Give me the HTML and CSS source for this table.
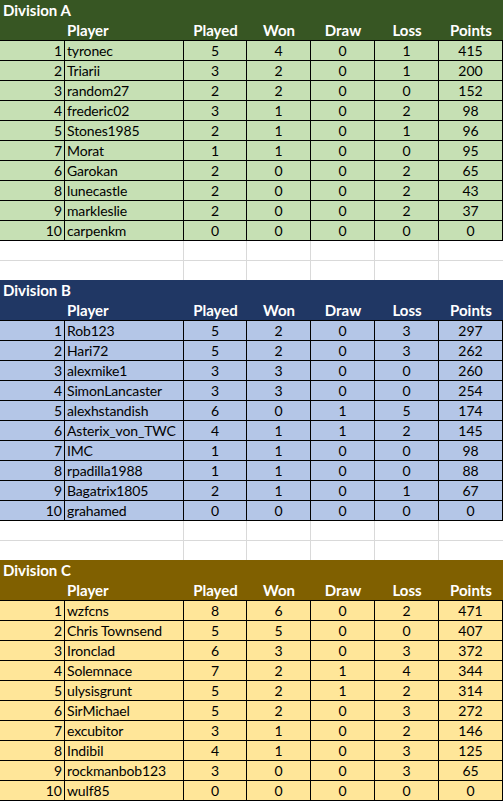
FILE: index.html
```html
<!DOCTYPE html>
<html>
<head>
<meta charset="utf-8">
<link rel="stylesheet" href="styles.css">
</head>
<body>
<div class="sheet">

<section class="division div-a">
  <div class="title">Division A</div>
  <div class="row head"><span></span><span class="name">Player</span><span>Played</span><span>Won</span><span>Draw</span><span>Loss</span><span>Points</span></div>
  <div class="row data"><span class="rank">1</span><span class="name">tyronec</span><span>5</span><span>4</span><span>0</span><span>1</span><span>415</span></div>
  <div class="row data"><span class="rank">2</span><span class="name">Triarii</span><span>3</span><span>2</span><span>0</span><span>1</span><span>200</span></div>
  <div class="row data"><span class="rank">3</span><span class="name">random27</span><span>2</span><span>2</span><span>0</span><span>0</span><span>152</span></div>
  <div class="row data"><span class="rank">4</span><span class="name">frederic02</span><span>3</span><span>1</span><span>0</span><span>2</span><span>98</span></div>
  <div class="row data"><span class="rank">5</span><span class="name">Stones1985</span><span>2</span><span>1</span><span>0</span><span>1</span><span>96</span></div>
  <div class="row data"><span class="rank">7</span><span class="name">Morat</span><span>1</span><span>1</span><span>0</span><span>0</span><span>95</span></div>
  <div class="row data"><span class="rank">6</span><span class="name">Garokan</span><span>2</span><span>0</span><span>0</span><span>2</span><span>65</span></div>
  <div class="row data"><span class="rank">8</span><span class="name">lunecastle</span><span>2</span><span>0</span><span>0</span><span>2</span><span>43</span></div>
  <div class="row data"><span class="rank">9</span><span class="name">markleslie</span><span>2</span><span>0</span><span>0</span><span>2</span><span>37</span></div>
  <div class="row data last"><span class="rank">10</span><span class="name">carpenkm</span><span>0</span><span>0</span><span>0</span><span>0</span><span>0</span></div>
</section>

<div class="spacer">
  <div class="row empty"><span></span><span></span><span></span><span></span><span></span><span></span><span></span></div>
  <div class="row empty short"><span></span><span></span><span></span><span></span><span></span><span></span><span></span></div>
</div>

<section class="division div-b">
  <div class="title">Division B</div>
  <div class="row head"><span></span><span class="name">Player</span><span>Played</span><span>Won</span><span>Draw</span><span>Loss</span><span>Points</span></div>
  <div class="row data"><span class="rank">1</span><span class="name">Rob123</span><span>5</span><span>2</span><span>0</span><span>3</span><span>297</span></div>
  <div class="row data"><span class="rank">2</span><span class="name">Hari72</span><span>5</span><span>2</span><span>0</span><span>3</span><span>262</span></div>
  <div class="row data"><span class="rank">3</span><span class="name">alexmike1</span><span>3</span><span>3</span><span>0</span><span>0</span><span>260</span></div>
  <div class="row data"><span class="rank">4</span><span class="name">SimonLancaster</span><span>3</span><span>3</span><span>0</span><span>0</span><span>254</span></div>
  <div class="row data"><span class="rank">5</span><span class="name">alexhstandish</span><span>6</span><span>0</span><span>1</span><span>5</span><span>174</span></div>
  <div class="row data"><span class="rank">6</span><span class="name">Asterix_von_TWC</span><span>4</span><span>1</span><span>1</span><span>2</span><span>145</span></div>
  <div class="row data"><span class="rank">7</span><span class="name">IMC</span><span>1</span><span>1</span><span>0</span><span>0</span><span>98</span></div>
  <div class="row data"><span class="rank">8</span><span class="name">rpadilla1988</span><span>1</span><span>1</span><span>0</span><span>0</span><span>88</span></div>
  <div class="row data"><span class="rank">9</span><span class="name">Bagatrix1805</span><span>2</span><span>1</span><span>0</span><span>1</span><span>67</span></div>
  <div class="row data last"><span class="rank">10</span><span class="name">grahamed</span><span>0</span><span>0</span><span>0</span><span>0</span><span>0</span></div>
</section>

<div class="spacer">
  <div class="row empty"><span></span><span></span><span></span><span></span><span></span><span></span><span></span></div>
  <div class="row empty short"><span></span><span></span><span></span><span></span><span></span><span></span><span></span></div>
</div>

<section class="division div-c">
  <div class="title">Division C</div>
  <div class="row head"><span></span><span class="name">Player</span><span>Played</span><span>Won</span><span>Draw</span><span>Loss</span><span>Points</span></div>
  <div class="row data"><span class="rank">1</span><span class="name">wzfcns</span><span>8</span><span>6</span><span>0</span><span>2</span><span>471</span></div>
  <div class="row data"><span class="rank">2</span><span class="name">Chris Townsend</span><span>5</span><span>5</span><span>0</span><span>0</span><span>407</span></div>
  <div class="row data"><span class="rank">3</span><span class="name">Ironclad</span><span>6</span><span>3</span><span>0</span><span>3</span><span>372</span></div>
  <div class="row data"><span class="rank">4</span><span class="name">Solemnace</span><span>7</span><span>2</span><span>1</span><span>4</span><span>344</span></div>
  <div class="row data"><span class="rank">5</span><span class="name">ulysisgrunt</span><span>5</span><span>2</span><span>1</span><span>2</span><span>314</span></div>
  <div class="row data"><span class="rank">6</span><span class="name">SirMichael</span><span>5</span><span>2</span><span>0</span><span>3</span><span>272</span></div>
  <div class="row data"><span class="rank">7</span><span class="name">excubitor</span><span>3</span><span>1</span><span>0</span><span>2</span><span>146</span></div>
  <div class="row data"><span class="rank">8</span><span class="name">Indibil</span><span>4</span><span>1</span><span>0</span><span>3</span><span>125</span></div>
  <div class="row data"><span class="rank">9</span><span class="name">rockmanbob123</span><span>3</span><span>0</span><span>0</span><span>3</span><span>65</span></div>
  <div class="row data last"><span class="rank">10</span><span class="name">wulf85</span><span>0</span><span>0</span><span>0</span><span>0</span><span>0</span></div>
</section>

</div>
</body>
</html>
```

FILE: styles.css
```css
html, body {
  margin: 0;
  padding: 0;
  background: #ffffff;
}

.sheet {
  width: 503px;
  font-family: Lato, "Liberation Sans", sans-serif;
  font-size: 14px;
  color: #000000;
}

.title {
  height: 20px;
  box-sizing: border-box;
  padding-left: 3px;
  line-height: 21px;
  font-size: 15px;
  font-weight: bold;
  color: #ffffff;
}

.row {
  display: grid;
  grid-template-columns: 65px 119px 63px 64px 64px 64px 64px;
  height: 20px;
  box-sizing: border-box;
}

.row span {
  display: flex;
  align-items: flex-end;
  justify-content: center;
  box-sizing: border-box;
  padding-bottom: 1px;
  line-height: 17px;
  white-space: nowrap;
  overflow: hidden;
}

.row .name {
  justify-content: flex-start;
  padding-left: 2px;
}

.row .rank {
  justify-content: flex-end;
  padding-right: 2px;
}

.head {
  font-size: 15px;
  font-weight: bold;
  color: #ffffff;
}

.data {
  border-top: 1px solid #000000;
}

.data span {
  border-right: 1px solid #000000;
}

.data .name {
  letter-spacing: -0.15px;
}

.data.last {
  height: 21px;
  border-bottom: 1px solid #000000;
}

.spacer .empty {
  height: 20px;
  border-bottom: 1px solid #d9d9d9;
}

.spacer .empty.short {
  height: 19px;
  border-bottom: none;
}

.spacer .empty span:nth-child(n+2):nth-child(-n+6) {
  border-right: 1px solid #d9d9d9;
}

.div-a .title, .div-a .head { background: #375623; }
.div-a .data { background: #c6e0b4; }

.div-b .title, .div-b .head { background: #203764; }
.div-b .data { background: #b4c6e7; }

.div-c .title, .div-c .head { background: #806000; }
.div-c .data { background: #ffe699; }
```
